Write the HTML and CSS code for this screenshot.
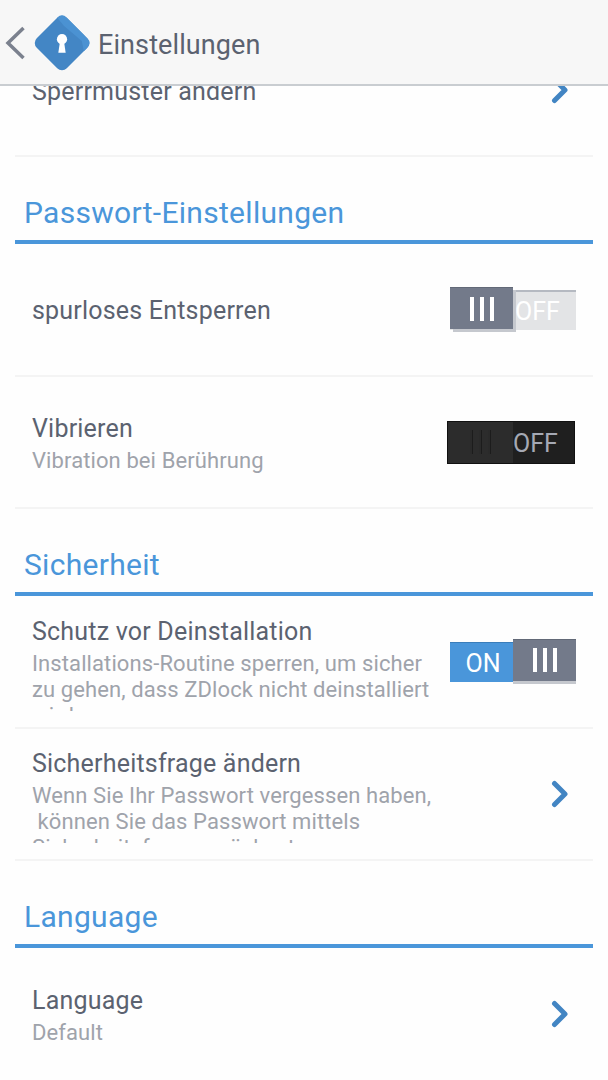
FILE: index.html
```html
<!DOCTYPE html>
<html lang="de">
<head>
    <meta charset="UTF-8">
    <meta name="viewport" content="width=device-width, initial-scale=1.0">
    <title>Einstellungen</title>
    <link rel="stylesheet" href="styles.css">
</head>
<body>
    <header class="topbar">
        <svg class="back" width="20" height="34" viewBox="0 0 20 34"><path d="M18.500 2L3 17L18.500 32"/></svg>
        <svg class="logo" width="56" height="56" viewBox="0 0 58 58">
            <g transform="rotate(45 29 29)">
                <rect x="7" y="7" width="44" height="44" rx="7" fill="#4386c5"/>
                <path d="M7 14Q7 7 14 7H44Q51 7 51 14V19L42 13L18 15Z" fill="#4b92d2"/>
            </g>
            <circle cx="29" cy="25" r="5.300" fill="#fff"/>
            <path d="M27 27h4l1.800 12h-7.600z" fill="#fff"/>
        </svg>
        <h1>Einstellungen</h1>
    </header>

    <main class="settings">
        <div class="row">
            <div class="text single"><div class="title">Sperrmuster ändern</div></div>
            <svg class="arrow" width="18" height="28" viewBox="0 0 18 28"><path d="M3.500 3.500L14 14L3.500 24.500"/></svg>
        </div>

        <h2>Passwort-Einstellungen</h2>
        <div class="row first">
            <div class="text single"><div class="title">spurloses Entsperren</div></div>
            <div class="toggle off">
                <span class="thumb"><i></i><i></i><i></i></span>
                <span class="label">OFF</span>
            </div>
        </div>
        <div class="row">
            <div class="text">
                <div class="title">Vibrieren</div>
                <div class="desc">Vibration bei Berührung</div>
            </div>
            <div class="toggle disabled">
                <span class="thumb"><i></i><i></i><i></i></span>
                <span class="label">OFF</span>
            </div>
        </div>

        <h2>Sicherheit</h2>
        <div class="row first">
            <div class="text">
                <div class="title">Schutz vor Deinstallation</div>
                <div class="desc">Installations-Routine sperren, um sicher<br>zu gehen, dass ZDlock nicht deinstalliert<br>wird.</div>
            </div>
            <div class="toggle on">
                <span class="label">ON</span>
                <span class="thumb"><i></i><i></i><i></i></span>
            </div>
        </div>
        <div class="row">
            <div class="text">
                <div class="title">Sicherheitsfrage ändern</div>
                <div class="desc">Wenn Sie Ihr Passwort vergessen haben,<br>&nbsp;können Sie das Passwort mittels<br>Sicherheitsfrage zurücksetzen</div>
            </div>
            <svg class="arrow" width="18" height="28" viewBox="0 0 18 28"><path d="M3.500 3.500L14 14L3.500 24.500"/></svg>
        </div>

        <h2>Language</h2>
        <div class="row last">
            <div class="text">
                <div class="title">Language</div>
                <div class="desc">Default</div>
            </div>
            <svg class="arrow" width="18" height="28" viewBox="0 0 18 28"><path d="M3.500 3.500L14 14L3.500 24.500"/></svg>
        </div>
    </main>
</body>
</html>
```
FILE: styles.css
```css
* {
    box-sizing: border-box;
}
body {
    margin: 0;
    height: 1080px;
    overflow: hidden;
    display: flex;
    flex-direction: column;
    background: #fefefe;
    color: #5b6270;
    font-family: Roboto, sans-serif;
}
.topbar {
    height: 86px;
    flex: none;
    display: flex;
    align-items: center;
    padding: 2px 0 0 5px;
    background: #f7f7f7;
    border-bottom: 2px solid #c9cdd1;
}
.topbar h1 {
    margin: 3px 0 0 8px;
    font-size: 27px;
    letter-spacing: 0.1px;
    font-weight: 400;
}
.back {
    fill: none;
    stroke: #7b818e;
    stroke-width: 3.5;
}
.logo {
    margin-left: 9px;
}
/* list is scrolled, its first row runs under the top bar */
.settings {
    flex: 1;
    min-height: 0;
    overflow: hidden;
    display: flex;
    flex-direction: column;
    justify-content: flex-end;
    padding: 0 15px;
}
h2 {
    flex: none;
    height: 87px;
    margin: 0;
    padding: 35px 0 0 9px;
    border-bottom: 4px solid #4a96da;
    color: #4a96da;
    font-size: 30px;
    letter-spacing: 0.3px;
    line-height: 42px;
    font-weight: 400;
}
.row {
    flex: none;
    height: 132px;
    display: flex;
    align-items: center;
    justify-content: space-between;
    padding: 0 17px;
    border-bottom: 2px solid #f4f4f4;
}
.row.first {
    height: 133px;
}
.row.last {
    border-bottom: 0;
}
.text {
    max-height: 98px;
    padding-top: 1px;
    overflow: hidden;
}
.text.single {
    padding-top: 3px;
}
.title {
    font-size: 25px;
    letter-spacing: 0.2px;
    line-height: 36px;
    white-space: nowrap;
}
.desc {
    margin-top: 1px;
    color: #9fa3ab;
    font-size: 22px;
    letter-spacing: 0.1px;
    line-height: 26px;
    white-space: nowrap;
}
.arrow {
    margin-right: 7px;
    fill: none;
    stroke: #4285c3;
    stroke-width: 5;
    stroke-linecap: round;
    stroke-linejoin: round;
}
.toggle {
    width: 126px;
    height: 40px;
    display: flex;
    align-items: center;
    color: #fff;
    font-size: 25px;
}
.thumb {
    width: 63px;
    height: 42px;
    flex: none;
    display: flex;
    align-items: center;
    justify-content: center;
    gap: 6px;
    margin-top: -5px;
    background: #737a8a;
    border-top: 1px solid #626977;
    box-shadow: 3px 3px 0 #c5c8ce;
}
.thumb i {
    width: 4px;
    height: 24px;
    background: #fff;
}
.toggle.off {
    background: #e3e4e6;
    border-top: 2px solid #b5b9c1;
}
.toggle.on {
    background: #4a96da;
    border-top: 1px solid #3a7dba;
}
.on .thumb {
    box-shadow: 0 3px 0 #c5c8ce;
}
.on .label {
    width: 63px;
    padding: 2px 0 0 3px;
    text-align: center;
}
.off .label {
    padding: 1px 0 0 2px;
}
.toggle.disabled {
    width: 128px;
    height: 43px;
    margin-right: 1px;
    background: #1f1f1f;
    border: 1px solid #111;
    color: #a5a9b4;
}
.disabled .label {
    padding-top: 2px;
}
.disabled .thumb {
    width: 65px;
    height: 41px;
    margin: 0;
    background: #2c2c2c;
    border: 0;
    box-shadow: none;
}
.disabled .thumb i {
    width: 3px;
    background: #2a2a2a;
    border-right: 1px solid #1c1c1c;
}
```
